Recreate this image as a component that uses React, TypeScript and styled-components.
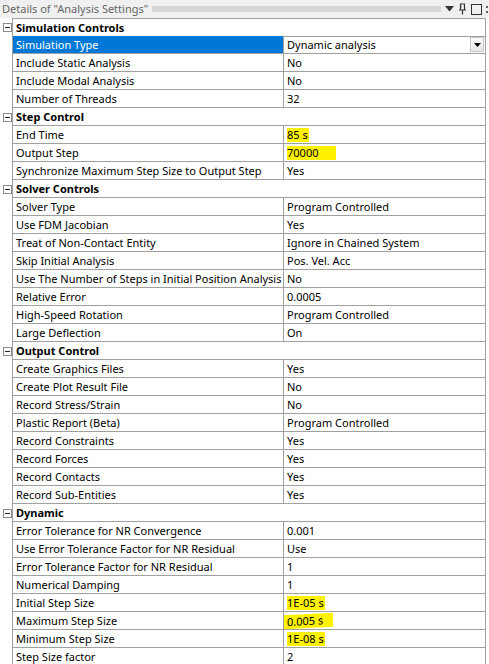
import React from "react";
import styled, { createGlobalStyle } from "styled-components";

const Global = createGlobalStyle`
  html, body { margin: 0; padding: 0; background: #ffffff; }
  body { font-family: "Noto Sans", "Open Sans", sans-serif; font-size: 11px; color: #000; }
`;

type Item =
  | { kind: "section"; title: string }
  | { kind: "prop"; label: string; value: string; selected?: boolean; mark?: number; slant?: boolean };

const data: Item[] = [
  { kind: "section", title: "Simulation Controls" },
  { kind: "prop", label: "Simulation Type", value: "Dynamic analysis", selected: true },
  { kind: "prop", label: "Include Static Analysis", value: "No" },
  { kind: "prop", label: "Include Modal Analysis", value: "No" },
  { kind: "prop", label: "Number of Threads", value: "32" },
  { kind: "section", title: "Step Control" },
  { kind: "prop", label: "End Time", value: "85 s", mark: 1 },
  { kind: "prop", label: "Output Step", value: "70000", mark: 18 },
  { kind: "prop", label: "Synchronize Maximum Step Size to Output Step", value: "Yes" },
  { kind: "section", title: "Solver Controls" },
  { kind: "prop", label: "Solver Type", value: "Program Controlled" },
  { kind: "prop", label: "Use FDM Jacobian", value: "Yes" },
  { kind: "prop", label: "Treat of Non-Contact Entity", value: "Ignore in Chained System" },
  { kind: "prop", label: "Skip Initial Analysis", value: "Pos. Vel. Acc" },
  { kind: "prop", label: "Use The Number of Steps in Initial Position Analysis", value: "No" },
  { kind: "prop", label: "Relative Error", value: "0.0005" },
  { kind: "prop", label: "High-Speed Rotation", value: "Program Controlled" },
  { kind: "prop", label: "Large Deflection", value: "On" },
  { kind: "section", title: "Output Control" },
  { kind: "prop", label: "Create Graphics Files", value: "Yes" },
  { kind: "prop", label: "Create Plot Result File", value: "No" },
  { kind: "prop", label: "Record Stress/Strain", value: "No" },
  { kind: "prop", label: "Plastic Report (Beta)", value: "Program Controlled" },
  { kind: "prop", label: "Record Constraints", value: "Yes" },
  { kind: "prop", label: "Record Forces", value: "Yes" },
  { kind: "prop", label: "Record Contacts", value: "Yes" },
  { kind: "prop", label: "Record Sub-Entities", value: "Yes" },
  { kind: "section", title: "Dynamic" },
  { kind: "prop", label: "Error Tolerance for NR Convergence", value: "0.001" },
  { kind: "prop", label: "Use Error Tolerance Factor for NR Residual", value: "Use" },
  { kind: "prop", label: "Error Tolerance Factor for NR Residual", value: "1" },
  { kind: "prop", label: "Numerical Damping", value: "1" },
  { kind: "prop", label: "Initial Step Size", value: "1E-05 s", mark: 1 },
  { kind: "prop", label: "Maximum Step Size", value: "0.005 s", mark: 10, slant: true },
  { kind: "prop", label: "Minimum Step Size", value: "1E-08 s", mark: 1 },
  { kind: "prop", label: "Step Size factor", value: "2" },
];

const Panel = styled.div`
  width: 489px;
  height: 664px;
  overflow: hidden;
  background: #ffffff;
`;

const TitleBar = styled.div`
  height: 18px;
  display: flex;
  align-items: center;
  background: #f0f0f0;
  padding-left: 2px;
  gap: 4px;
`;

const Title = styled.span`
  color: #666666;
  font-size: 11px;
  white-space: nowrap;
  line-height: 18px;
`;

const Dots = styled.div`
  flex: 1;
  height: 6px;
  background-image: radial-gradient(circle, #b8b8b8 0.6px, transparent 0.8px);
  background-size: 2px 2px;
`;

const TitleIcons = styled.div`
  display: flex;
  align-items: center;
  gap: 4px;
  margin-right: -3px;
`;

const Grid = styled.div`
  display: flex;
  flex-direction: column;
  width: 487px;
`;

const Row = styled.div`
  display: grid;
  grid-template-columns: 12px 271px 203px;
  height: 18px;
`;

const Gutter = styled.div`
  display: flex;
  align-items: center;
  justify-content: flex-start;
  padding-left: 3px;
`;

const Toggle = styled.div`
  width: 7px;
  height: 7px;
  border: 1px solid #8a8a8a;
  background: #fff;
  position: relative;
  &::after {
    content: "";
    position: absolute;
    left: 1px;
    right: 1px;
    top: 3px;
    height: 1px;
    background: #222;
  }
`;

const SectionCell = styled.div<{ $first?: boolean }>`
  grid-column: 2 / 4;
  border-left: 1px solid #a0a0a0;
  border-right: 1px solid #a0a0a0;
  border-bottom: 1px solid #a0a0a0;
  border-top: ${(p) => (p.$first ? "1px solid #a0a0a0" : "none")};
  font-weight: bold;
  padding-left: 3px;
  line-height: 17px;
  white-space: nowrap;
`;

const LabelCell = styled.div<{ $selected?: boolean }>`
  border-left: 1px solid #a0a0a0;
  border-bottom: 1px solid #a0a0a0;
  background: ${(p) => (p.$selected ? "#0078d7" : "#ffffff")};
  color: ${(p) => (p.$selected ? "#ffffff" : "#000000")};
  padding-left: 3px;
  line-height: 17px;
  white-space: nowrap;
  overflow: hidden;
`;

const ValueCell = styled.div`
  border-left: 1px solid #a0a0a0;
  border-right: 1px solid #a0a0a0;
  border-bottom: 1px solid #a0a0a0;
  padding-left: 3px;
  line-height: 17px;
  white-space: nowrap;
  display: flex;
  align-items: center;
  justify-content: space-between;
`;

const Marked = styled.span<{ $extra: number; $slant?: boolean }>`
  background: #fff200;
  line-height: 14px;
  padding-right: ${(p) => p.$extra}px;
  margin-left: ${(p) => (p.$slant ? "-3px" : "0")};
  padding-left: ${(p) => (p.$slant ? "3px" : "0")};
  transform: ${(p) => (p.$slant ? "skewY(-3deg)" : "none")};
`;

const DropButton = styled.div`
  width: 12px;
  height: 13px;
  margin-right: 1px;
  border: 1px solid #c8c8c8;
  background: linear-gradient(#fdfdfd, #e6e6e6);
  display: flex;
  align-items: center;
  justify-content: center;
`;

const Tri = () => (
  <svg width="7" height="4" viewBox="0 0 7 4">
    <path d="M0 0 H7 L3.5 4 Z" fill="#000" />
  </svg>
);

export default function App() {
  let first = true;
  return (
    <Panel>
      <Global />
      <TitleBar>
        <Title>Details of "Analysis Settings"</Title>
        <Dots />
        <TitleIcons>
          <svg width="9" height="6" viewBox="0 0 9 6">
            <path d="M0 0 H9 L4.5 5.5 Z" fill="#333" />
          </svg>
          <svg width="9" height="12" viewBox="0 0 9 12">
            <path d="M2 1 H7 M2.5 1 V7 M6.5 1 V7 M1 7 H8 M4.5 7 V11.5 M2.5 4 H3.5" stroke="#333" strokeWidth="1.2" fill="none" />
          </svg>
          <svg width="11" height="11" viewBox="0 0 11 11">
            <rect x="0.5" y="0.5" width="10" height="10" stroke="#333" fill="none" />
          </svg>
          <svg width="6" height="11" viewBox="0 0 6 11">
            <path d="M1 2 V4 M1 7 V9" stroke="#333" strokeWidth="1.5" />
          </svg>
        </TitleIcons>
      </TitleBar>
      <Grid>
        {data.map((it, i) => {
          if (it.kind === "section") {
            const f = first;
            first = false;
            return (
              <Row key={i}>
                <Gutter>
                  <Toggle />
                </Gutter>
                <SectionCell $first={f}>{it.title}</SectionCell>
              </Row>
            );
          }
          return (
            <Row key={i}>
              <Gutter />
              <LabelCell $selected={it.selected}>{it.label}</LabelCell>
              <ValueCell>
                {it.mark ? (
                  <Marked $extra={it.mark} $slant={it.slant}>
                    {it.value}
                  </Marked>
                ) : (
                  <span>{it.value}</span>
                )}
                {it.selected && (
                  <DropButton>
                    <Tri />
                  </DropButton>
                )}
              </ValueCell>
            </Row>
          );
        })}
      </Grid>
    </Panel>
  );
}
